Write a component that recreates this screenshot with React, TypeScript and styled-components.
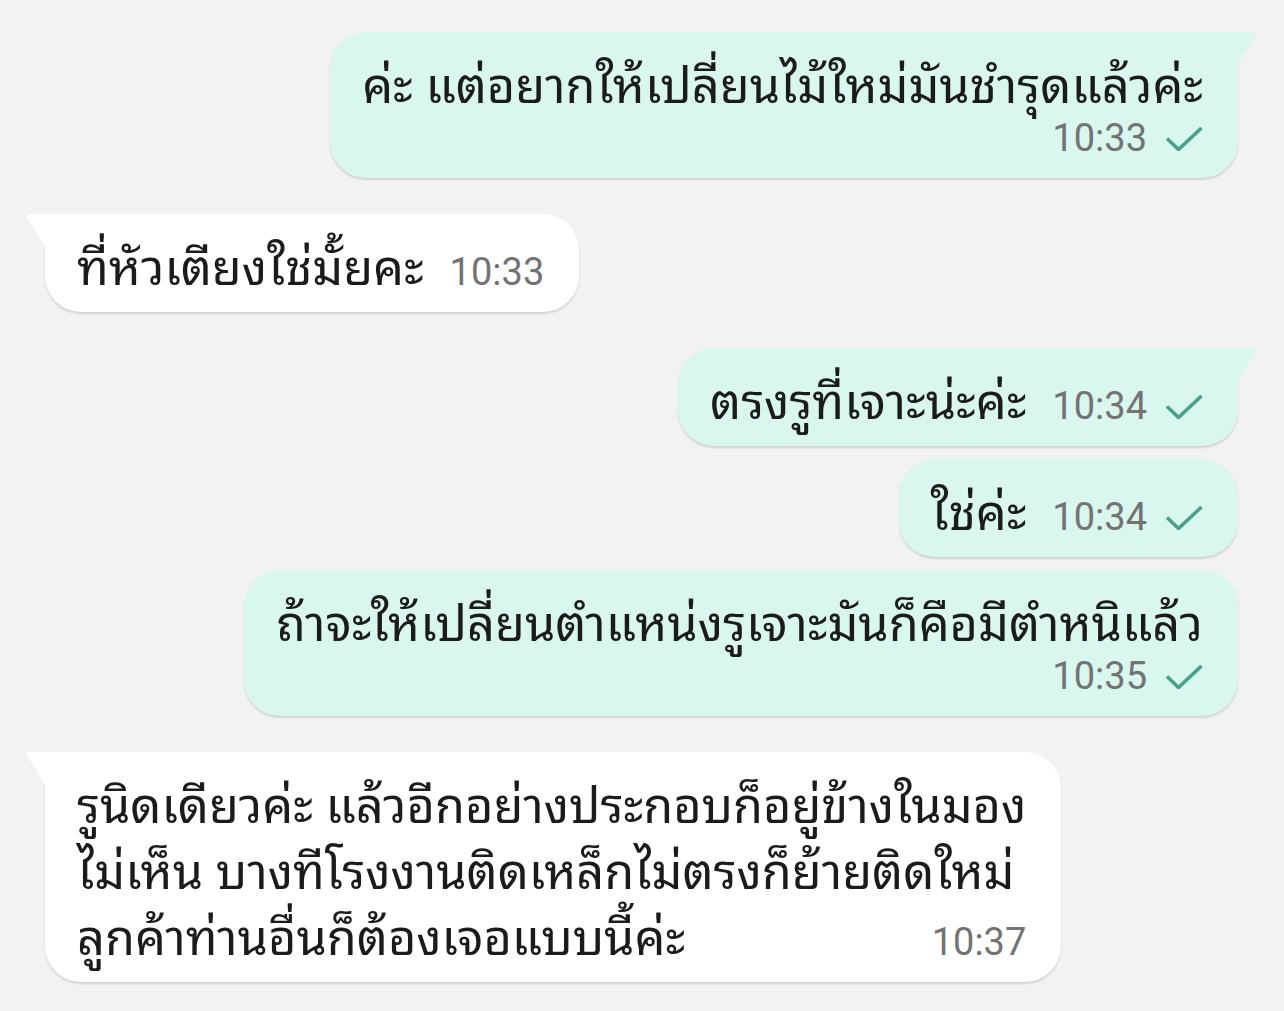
import React from "react";
import styled, { createGlobalStyle, css } from "styled-components";

const Global = createGlobalStyle`
  html, body {
    margin: 0;
    padding: 0;
    background: #f2f2f2;
  }
  #root {
    min-height: 1011px;
  }
`;

const THAI = `"Noto Sans Thai Looped", "Noto Serif Thai", "Loma", "Garuda", "Noto Sans Thai", "Noto Sans", sans-serif`;

const Chat = styled.div`
  display: flex;
  flex-direction: column;
  padding: 32px 46px 0 45px;
  background: #f2f2f2;
  min-height: 1011px;
  box-sizing: border-box;
`;

const Row = styled.div<{ $out: boolean; $first: boolean; $top: boolean }>`
  display: flex;
  justify-content: ${(p) => (p.$out ? "flex-end" : "flex-start")};
  margin-top: ${(p) => (p.$top ? 0 : p.$first ? 36 : 13)}px;
`;

const Bubble = styled.div<{ $out: boolean; $tail: boolean }>`
  position: relative;
  box-sizing: border-box;
  background: ${(p) => (p.$out ? "#d9f6ef" : "#ffffff")};
  border-radius: 36px;
  ${(p) =>
    p.$tail &&
    (p.$out
      ? css`
          border-top-right-radius: 0;
        `
      : css`
          border-top-left-radius: 0;
        `)}
  box-shadow: 0 2px 2px rgba(0, 0, 0, 0.13);
  padding: 16px 35px 16px 32px;
  font-family: ${THAI};
  color: #1b1b1b;
`;

const Tail = styled.svg<{ $out: boolean }>`
  position: absolute;
  top: 0;
  width: 21px;
  height: 36px;
  ${(p) =>
    p.$out
      ? css`
          right: -20px;
        `
      : css`
          left: -20px;
          transform: scaleX(-1);
        `}
`;

const Line = styled.div`
  font-size: 48.7px;
  line-height: 66px;
  height: 66px;
  white-space: nowrap;
`;

const LastRow = styled.div`
  display: flex;
  align-items: flex-end;
  justify-content: space-between;
  gap: 26px;
`;

const MetaRow = styled.div`
  display: flex;
  justify-content: flex-end;
  height: 48px;
  align-items: center;
`;

const Meta = styled.span`
  display: inline-flex;
  align-items: center;
  gap: 18px;
  font-family: Roboto, "Liberation Sans", sans-serif;
  font-size: 38px;
  line-height: 48px;
  height: 48px;
  color: #737373;
  white-space: nowrap;
`;

const Check = styled.svg`
  width: 38px;
  height: 24px;
  flex: none;
  margin-top: 2px;
`;

type Msg = {
  out: boolean;
  lines: string[];
  time: string;
  stacked?: boolean;
  tail?: boolean;
};

const messages: Msg[] = [
  {
    out: true,
    lines: ["ค่ะ แต่อยากให้เปลี่ยนไม้ใหม่มันชำรุดแล้วค่ะ"],
    time: "10:33",
    stacked: true,
    tail: true,
  },
  { out: false, lines: ["ที่หัวเตียงใช่มั้ยคะ"], time: "10:33", tail: true },
  { out: true, lines: ["ตรงรูที่เจาะน่ะค่ะ"], time: "10:34", tail: true },
  { out: true, lines: ["ใช่ค่ะ"], time: "10:34" },
  {
    out: true,
    lines: ["ถ้าจะให้เปลี่ยนตำแหน่งรูเจาะมันก็คือมีตำหนิแล้ว"],
    time: "10:35",
    stacked: true,
  },
  {
    out: false,
    lines: [
      "รูนิดเดียวค่ะ แล้วอีกอย่างประกอบก็อยู่ข้างในมอง",
      "ไม่เห็น บางทีโรงงานติดเหล็กไม่ตรงก็ย้ายติดใหม่",
      "ลูกค้าท่านอื่นก็ต้องเจอแบบนี้ค่ะ",
    ],
    time: "10:37",
    tail: true,
  },
];

function Ticks() {
  return (
    <Check viewBox="0 0 38 24">
      <path
        d="M2 11.5 L13.5 22.5 L36.5 1"
        fill="none"
        stroke="#4a9f8d"
        strokeWidth="3.6"
        strokeLinecap="butt"
        strokeLinejoin="miter"
      />
    </Check>
  );
}

function TimeMeta({ time, out }: { time: string; out: boolean }) {
  return (
    <Meta>
      {time}
      {out && <Ticks />}
    </Meta>
  );
}

function MessageBubble({ m }: { m: Msg }) {
  const body = m.lines.slice(0, -1);
  const last = m.lines[m.lines.length - 1];
  return (
    <Bubble $out={m.out} $tail={!!m.tail}>
      {m.tail && (
        <Tail $out={m.out} viewBox="0 0 21 36">
          <path
            d="M0 0 H16 Q21 0 18.5 4 L0 34 Z"
            fill={m.out ? "#d9f6ef" : "#ffffff"}
          />
        </Tail>
      )}
      {body.map((l, i) => (
        <Line key={i}>{l}</Line>
      ))}
      {m.stacked ? (
        <>
          <Line>{last}</Line>
          <MetaRow>
            <TimeMeta time={m.time} out={m.out} />
          </MetaRow>
        </>
      ) : (
        <LastRow>
          <Line>{last}</Line>
          <TimeMeta time={m.time} out={m.out} />
        </LastRow>
      )}
    </Bubble>
  );
}

export default function App() {
  return (
    <>
      <Global />
      <Chat>
        {messages.map((m, i) => (
          <Row
            key={i}
            $out={m.out}
            $top={i === 0}
            $first={i > 0 && messages[i - 1].out !== m.out}
          >
            <MessageBubble m={m} />
          </Row>
        ))}
      </Chat>
    </>
  );
}
